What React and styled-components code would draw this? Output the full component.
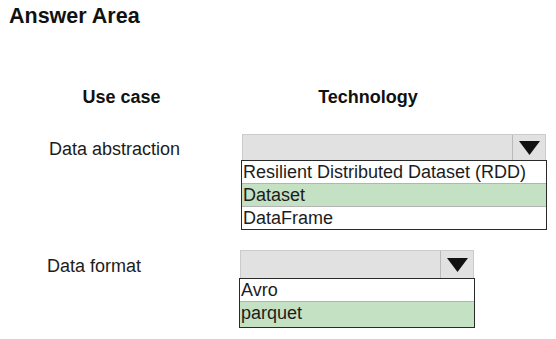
import React from "react";
import styled, { createGlobalStyle } from "styled-components";

const Global = createGlobalStyle`
  html, body { margin: 0; padding: 0; background: #ffffff; }
  body { font-family: "Liberation Sans", Arial, sans-serif; color: #1c1c1c; }
`;

const Page = styled.div`
  width: 556px;
  height: 339px;
  padding-top: 4px;
  box-sizing: border-box;
  display: flex;
  flex-direction: column;
  overflow: hidden;
`;

const Title = styled.h1`
  margin: 0 0 0 9px;
  font-size: 21.5px;
  line-height: 24px;
  font-weight: 700;
  color: #111;
`;

const HeaderRow = styled.div`
  display: flex;
  margin-top: 58px;
  padding-left: 47px;
`;

const HeadCell = styled.div`
  width: ${(p) => p.$width}px;
  text-align: center;
  font-size: 18px;
  line-height: 22px;
  font-weight: 700;
  color: #111;
`;

const Row = styled.div`
  display: flex;
  align-items: flex-start;
  margin-top: ${(p) => p.$gap}px;
  padding-left: ${(p) => p.$indent}px;
`;

const Label = styled.div`
  width: ${(p) => p.$width}px;
  padding-top: ${(p) => p.$top}px;
  font-size: 18px;
  line-height: 22px;
  color: #1c1c1c;
`;

const Dropdown = styled.div`
  width: ${(p) => p.$width}px;
  display: flex;
  flex-direction: column;
`;

const Select = styled.div`
  height: ${(p) => p.$height}px;
  box-sizing: border-box;
  margin: 0 1px;
  display: flex;
  justify-content: flex-end;
  background: #e1e1e1;
  border: 1px solid #cbcbcb;
  border-bottom: none;
`;

const ArrowCell = styled.div`
  width: 32px;
  display: flex;
  align-items: center;
  justify-content: center;
  border-left: 1px solid #b9b9b9;
`;

const List = styled.div`
  border: 1px solid #2a2a2a;
  display: flex;
  flex-direction: column;
`;

const Option = styled.div`
  height: ${(p) => p.$height}px;
  padding-left: 1px;
  font-size: 18px;
  line-height: 22px;
  color: #1c1c1c;
  white-space: nowrap;
  background: ${(p) => (p.$selected ? "#c5e1c3" : "#ffffff")};
  & + & {
    border-top: 1px solid #b4b4b4;
  }
`;

const Arrow = () => (
  <svg width="21" height="14" viewBox="0 0 21 14">
    <polygon points="0,0 21,0 10.5,14" fill="#111" />
  </svg>
);

export default function App() {
  return (
    <>
      <Global />
      <Page>
        <Title>Answer Area</Title>
        <HeaderRow>
          <HeadCell $width={149}>Use case</HeadCell>
          <HeadCell $width={344}>Technology</HeadCell>
        </HeaderRow>
        <Row $gap={26} $indent={49}>
          <Label $width={192} $top={4}>Data abstraction</Label>
          <Dropdown $width={306}>
            <Select $height={26}>
              <ArrowCell>
                <Arrow />
              </ArrowCell>
            </Select>
            <List>
              <Option $height={22}>Resilient Distributed Dataset (RDD)</Option>
              <Option $height={22} $selected>Dataset</Option>
              <Option $height={22}>DataFrame</Option>
            </List>
          </Dropdown>
        </Row>
        <Row $gap={20} $indent={47}>
          <Label $width={192} $top={5}>Data format</Label>
          <Dropdown $width={236}>
            <Select $height={28}>
              <ArrowCell>
                <Arrow />
              </ArrowCell>
            </Select>
            <List>
              <Option $height={22}>Avro</Option>
              <Option $height={25} $selected>parquet</Option>
            </List>
          </Dropdown>
        </Row>
      </Page>
    </>
  );
}
